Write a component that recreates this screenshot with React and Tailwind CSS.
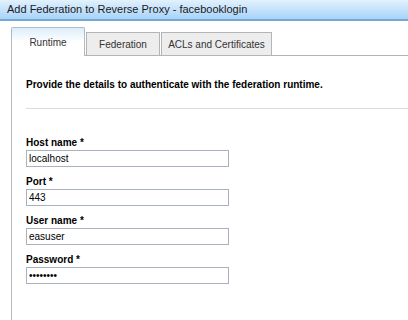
import React from 'react';

const fields = [
  { label: 'Host name', value: 'localhost', type: 'text' },
  { label: 'Port', value: '443', type: 'text' },
  { label: 'User name', value: 'easuser', type: 'text' },
  { label: 'Password', value: 'password', type: 'password' },
];

const tabs = [
  { name: 'Federation', width: 'w-[74px]' },
  { name: 'ACLs and Certificates', width: 'w-[111px]' },
];

const App = () => {
  return (
    <div className="w-[408px] h-[320px] overflow-hidden bg-white flex flex-col font-['Liberation_Sans',Arial,sans-serif] text-[#1a1a1a]">
      {/* Title bar */}
      <div className="h-[21px] shrink-0 bg-gradient-to-b from-[#e2f1fd] to-[#a7d3f8] border-b-2 border-[#74a8d4] pl-[7px] flex items-center text-[11px] leading-none">
        Add Federation to Reverse Proxy - facebooklogin
      </div>

      {/* Tabs */}
      <div className="h-[35px] shrink-0 flex items-end pl-[11px]">
        <div className="w-[74px] h-[29px] border border-b-0 border-[#b9b9b9] rounded-t-[2px] bg-gradient-to-b from-[#dbeefc] via-white to-white flex items-center justify-center text-[10px] text-[#333]">
          Runtime
        </div>
        <div className="w-[1px] h-[1px] border-b border-[#b4b4b4]" />
        {tabs.map((tab, idx) => (
          <React.Fragment key={idx}>
            <div
              className={`${tab.width} h-[24px] border border-[#b4b4b4] bg-[#ededed] flex items-center justify-center text-[10px] text-[#333]`}
            >
              {tab.name}
            </div>
            <div className="w-[1px] h-[1px] border-b border-[#b4b4b4]" />
          </React.Fragment>
        ))}
        <div className="flex-1 border-b border-[#b4b4b4]" />
      </div>

      {/* Panel */}
      <div className="flex-1 ml-[11px] border-l border-[#b9b9b9] pl-[14px] pt-[22px]">
        <p className="text-[10px] font-bold leading-[14px] text-black">
          Provide the details to authenticate with the federation runtime.
        </p>
        <div className="mt-[16px] border-t border-[#dcdcdc]" />

        <div className="pt-[28px] flex flex-col gap-[9px]">
          {fields.map((field, idx) => (
            <div key={idx} className="flex flex-col">
              <label className="text-[10px] font-bold leading-[12px] text-black">
                {field.label} *
              </label>
              <input
                type={field.type}
                defaultValue={field.value}
                className="mt-[1px] w-[203px] h-[17px] border border-[#a9b3c0] px-[2px] text-[10px] leading-none text-black outline-none"
              />
            </div>
          ))}
        </div>
      </div>
    </div>
  );
};

export default App;
